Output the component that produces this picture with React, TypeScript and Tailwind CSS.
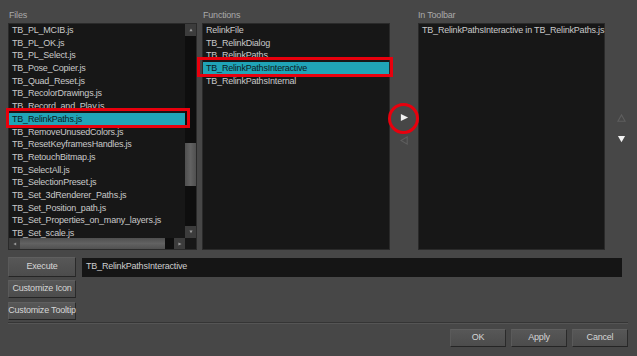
const FILES = [
  "TB_PL_MCIB.js",
  "TB_PL_OK.js",
  "TB_PL_Select.js",
  "TB_Pose_Copier.js",
  "TB_Quad_Reset.js",
  "TB_RecolorDrawings.js",
  "TB_Record_and_Play.js",
  "TB_RelinkPaths.js",
  "TB_RemoveUnusedColors.js",
  "TB_ResetKeyframesHandles.js",
  "TB_RetouchBitmap.js",
  "TB_SelectAll.js",
  "TB_SelectionPreset.js",
  "TB_Set_3dRenderer_Paths.js",
  "TB_Set_Position_path.js",
  "TB_Set_Properties_on_many_layers.js",
  "TB_Set_scale.js",
];

const FUNCTIONS = [
  "RelinkFile",
  "TB_RelinkDialog",
  "TB_RelinkPaths",
  "TB_RelinkPathsInteractive",
  "TB_RelinkPathsInternal",
];

function Row({ label, selected }: { label: string; selected?: boolean }) {
  return (
    <div
      className={
        "h-[12.7px] shrink-0 whitespace-nowrap pl-[3px] leading-[12.7px] " +
        (selected ? "bg-[#20a4b7] text-[#0d1a1c]" : "text-[#c9c9c9]")
      }
    >
      {label}
    </div>
  );
}

function Tri({ dir, className }: { dir: "up" | "down" | "left" | "right"; className: string }) {
  const pts = {
    up: "1,8 5,1 9,8",
    down: "1,1 9,1 5,8",
    left: "8,1 8,9 1,5",
    right: "1,1 1,9 9,5",
  }[dir];
  return (
    <svg width="10" height="10" viewBox="0 0 10 10" className={className}>
      <polygon points={pts} />
    </svg>
  );
}

function Button({ children, className }: { children: React.ReactNode; className?: string }) {
  return (
    <div
      className={
        "flex items-center justify-center whitespace-nowrap border border-t-[#5f5f5f] border-l-[#5a5a5a] border-b-[#252525] border-r-[#2a2a2a] bg-gradient-to-b from-[#575757] to-[#4c4c4c] text-[#d6d6d6] " +
        (className ?? "")
      }
    >
      {children}
    </div>
  );
}

export default function App() {
  return (
    <div
      className="relative h-[356px] w-[637px] overflow-hidden bg-[#474747] text-[9px] tracking-[-0.2px]"
      style={{ fontFamily: '"Liberation Sans", Arial, sans-serif' }}
    >
      {/* Top: three lists */}
      <div className="flex pl-[8px] pt-[7px]">
        {/* Files */}
        <div className="flex w-[189px] flex-col">
          <div className="h-[16px] pl-[1px] leading-[16px] text-[#a9a9a9]">Files</div>
          <div className="flex h-[227px] flex-col border border-[#2a2a2a] bg-[#171717]">
            <div className="flex min-h-0 flex-1">
              <div className="flex flex-1 flex-col overflow-hidden">
                {FILES.map((f) => (
                  <Row key={f} label={f} selected={f === "TB_RelinkPaths.js"} />
                ))}
              </div>
              {/* vertical scrollbar */}
              <div className="flex w-[11px] flex-col bg-[#0e0e0e]">
                <div className="flex h-[12px] items-center justify-center bg-[#3c3c3c]">
                  <Tri dir="up" className="h-[4px] w-[4px] fill-[#9a9a9a]" />
                </div>
                <div className="h-[107px]" />
                <div className="h-[43px] bg-gradient-to-r from-[#4f4f4f] via-[#626262] to-[#505050]" />
                <div className="flex-1" />
                <div className="flex h-[12px] items-center justify-center bg-[#3c3c3c]">
                  <Tri dir="down" className="h-[4px] w-[4px] fill-[#9a9a9a]" />
                </div>
              </div>
            </div>
            {/* horizontal scrollbar */}
            <div className="flex h-[11px] bg-[#0e0e0e]">
              <div className="flex w-[11px] items-center justify-center bg-[#3c3c3c]">
                <Tri dir="left" className="h-[4px] w-[4px] fill-[#9a9a9a]" />
              </div>
              <div className="w-[145px] bg-gradient-to-b from-[#4f4f4f] via-[#626262] to-[#505050]" />
              <div className="flex-1" />
              <div className="flex w-[11px] items-center justify-center bg-[#3c3c3c]">
                <Tri dir="right" className="h-[4px] w-[4px] fill-[#9a9a9a]" />
              </div>
              <div className="w-[11px] bg-[#171717]" />
            </div>
          </div>
        </div>

        {/* Functions */}
        <div className="ml-[5px] flex w-[188px] flex-col">
          <div className="h-[16px] pl-[1px] leading-[16px] text-[#a9a9a9]">Functions</div>
          <div className="flex h-[227px] flex-col border border-[#2a2a2a] bg-[#171717]">
            {FUNCTIONS.map((f) => (
              <Row key={f} label={f} selected={f === "TB_RelinkPathsInteractive"} />
            ))}
          </div>
        </div>

        {/* Add / remove arrows */}
        <div className="flex w-[28px] flex-col items-center pt-[106px]">
          <Tri dir="right" className="h-[9px] w-[9px] fill-[#f2f2f2]" />
          <Tri dir="left" className="mt-[14px] h-[9px] w-[9px] fill-none stroke-[#5e5e5e] stroke-[1.2]" />
        </div>

        {/* In Toolbar */}
        <div className="flex w-[187px] flex-col">
          <div className="h-[16px] leading-[16px] text-[#a9a9a9]">In Toolbar</div>
          <div className="flex h-[227px] flex-col border border-[#2a2a2a] bg-[#171717]">
            <Row label="TB_RelinkPathsInteractive in TB_RelinkPaths.js" />
          </div>
        </div>

        {/* Move up / down */}
        <div className="flex w-[32px] flex-col items-center pt-[107px]">
          <Tri dir="up" className="h-[9px] w-[9px] fill-none stroke-[#5e5e5e] stroke-[1.2]" />
          <Tri dir="down" className="mt-[12px] h-[9px] w-[9px] fill-[#f2f2f2]" />
        </div>
      </div>

      {/* Bottom controls */}
      <div className="flex flex-col px-[8px] pt-[7px]">
        <div className="flex items-center gap-[6px]">
          <Button className="h-[20px] w-[68px]">Execute</Button>
          <div className="flex h-[19px] flex-1 items-center bg-[#151515] pl-[4px] text-[#cdcdcd]">
            TB_RelinkPathsInteractive
          </div>
          <div className="w-[1px]" />
        </div>
        <Button className="mt-[3px] h-[18px] w-[68px]">Customize Icon</Button>
        <Button className="mt-[4px] h-[18px] w-[68px]">Customize Tooltip</Button>
      </div>

      <div className="ml-[8px] mr-[9px] mt-[2px] h-[2px] border-t border-b border-t-[#353535] border-b-[#555555]" />

      <div className="flex justify-end gap-[5px] pr-[9px] pt-[5px]">
        <Button className="h-[18px] w-[56px]">OK</Button>
        <Button className="h-[18px] w-[56px]">Apply</Button>
        <Button className="h-[18px] w-[56px]">Cancel</Button>
      </div>

      {/* annotation overlays */}
      <div className="pointer-events-none absolute left-[6px] top-[108px] h-[20px] w-[184px] border-[3px] border-[#e8000d]" />
      <div className="pointer-events-none absolute left-[197px] top-[57px] h-[20px] w-[196px] border-[3px] border-[#e8000d]" />
      <div className="pointer-events-none absolute left-[388px] top-[103px] h-[31px] w-[31px] rounded-full border-[3px] border-[#e8000d]" />
    </div>
  );
}
